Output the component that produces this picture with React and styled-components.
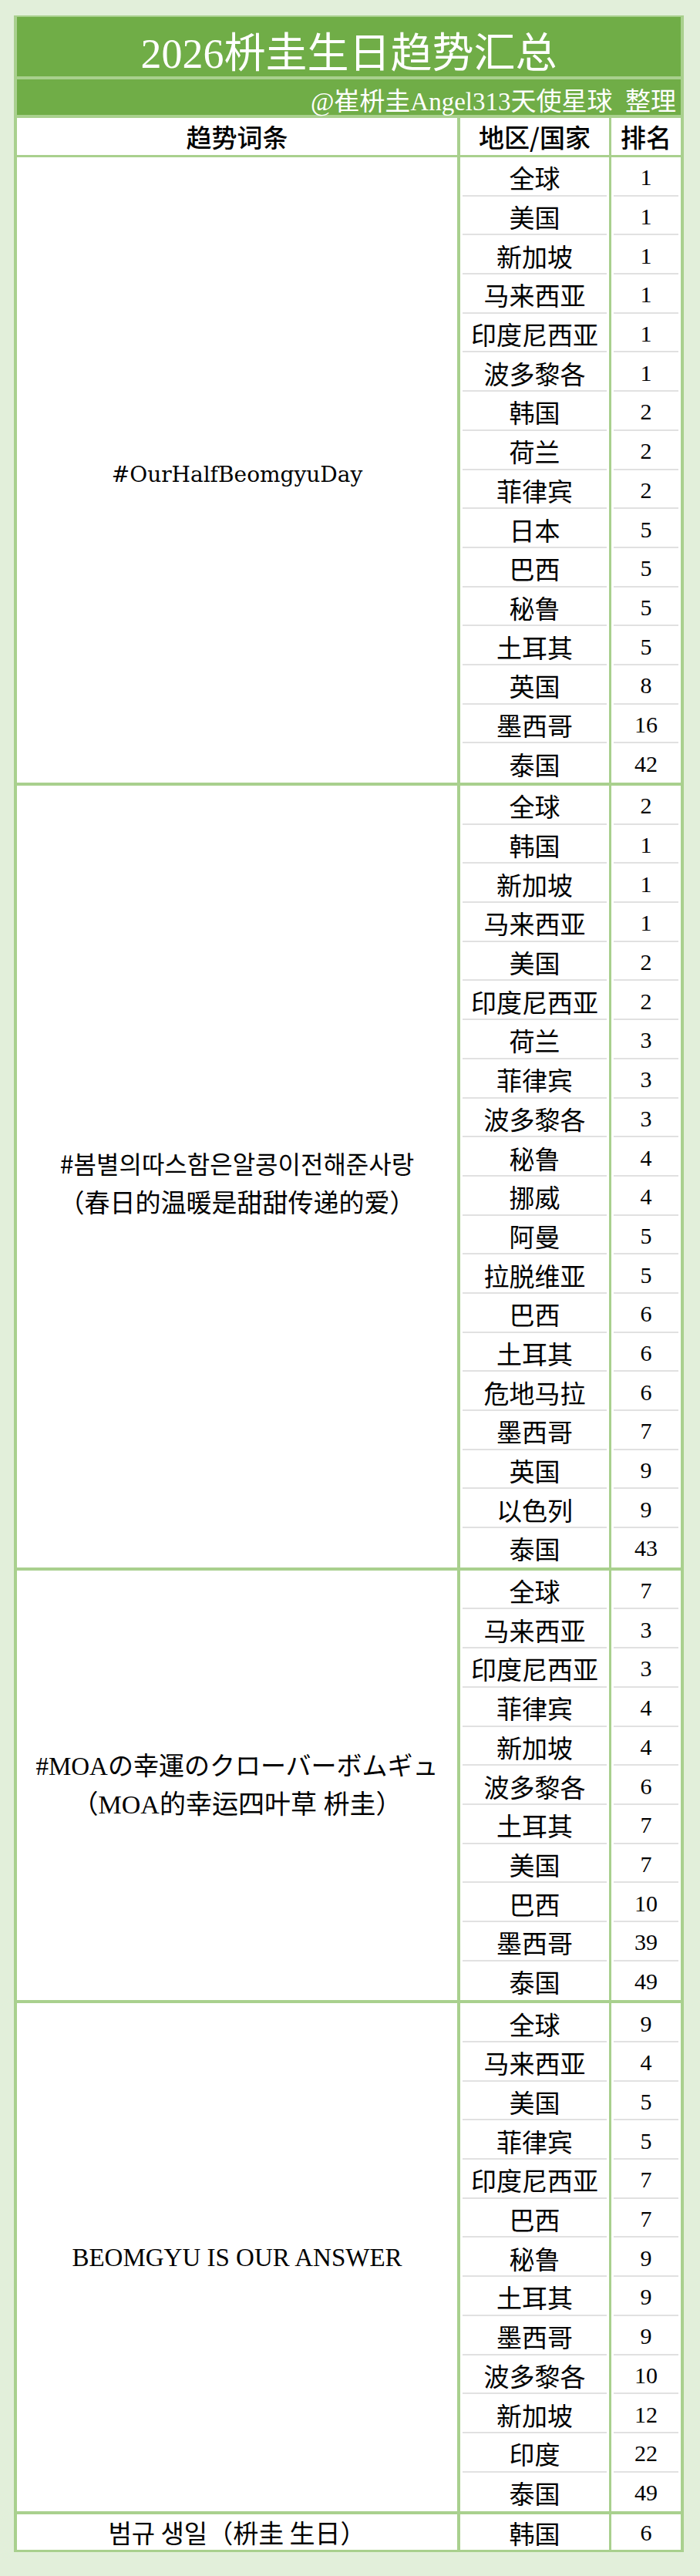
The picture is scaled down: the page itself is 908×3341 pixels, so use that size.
import React from 'react';
import styled, { createGlobalStyle } from 'styled-components';

const GlobalStyle = createGlobalStyle`
  html, body {
    margin: 0;
    padding: 0;
    background: #e2efda;
  }
`;

const LINE = '#a9d08e';
const CJK = '"Noto Sans CJK SC", sans-serif';

const Page = styled.div`
  min-height: 3341px;
  box-sizing: border-box;
  padding: 20px 0 26px 18px;
  background: #e2efda;
`;

const Table = styled.div`
  width: 869px;
  box-sizing: border-box;
  border-left: 4px solid ${LINE};
  border-right: 4px solid ${LINE};
  border-top: 2px solid ${LINE};
  background: #ffffff;
`;

const TitleBar = styled.div`
  height: 81px;
  box-sizing: border-box;
  background: #70ad47;
  color: #ffffff;
  display: flex;
  align-items: center;
  justify-content: center;
  padding-top: 8px;
  font-family: "Liberation Serif", "Noto Sans CJK SC", serif;
  font-size: 54px;
  border-bottom: 4px solid ${LINE};
`;

const SubBar = styled.div`
  height: 50px;
  box-sizing: border-box;
  background: #70ad47;
  color: #ffffff;
  display: flex;
  align-items: center;
  justify-content: flex-end;
  padding: 6px 6px 0 0;
  font-family: "Liberation Serif", "Noto Sans CJK SC", serif;
  font-size: 33px;
  white-space: pre;
  border-bottom: 4px solid ${LINE};
`;

const Grid = styled.div`
  display: grid;
  grid-template-columns: 575px 196px 90px;
  grid-auto-rows: ${(p) => p.$rowH}px;
  border-bottom: ${(p) => p.$sep}px solid ${LINE};
`;

const HeadCell = styled.div`
  display: flex;
  align-items: center;
  justify-content: center;
  font-family: ${CJK};
  font-size: 33px;
  font-weight: 500;
  color: #000;
  box-sizing: border-box;
  border-right: ${(p) => p.$border || 0}px solid ${LINE};
`;

const TermCell = styled.div`
  grid-column: 1;
  grid-row: 1 / span ${(p) => p.$span};
  display: flex;
  flex-direction: column;
  align-items: center;
  justify-content: center;
  border-right: 4px solid ${LINE};
  color: #000;
  padding-top: ${(p) => p.$shift || 0}px;
  box-sizing: border-box;
`;

const TermLine = styled.div`
  font-family: ${(p) => p.$font};
  font-size: ${(p) => p.$size}px;
  line-height: 50px;
  white-space: pre;
`;

const Cell = styled.div`
  display: flex;
  align-items: center;
  justify-content: center;
  box-sizing: border-box;
  color: #000;
  border-right: ${(p) => p.$border || 0}px solid ${LINE};
  background-image: ${(p) =>
    p.$last ? 'none' : 'linear-gradient(#e1e1e1, #e1e1e1)'};
  background-repeat: no-repeat;
  background-size: calc(100% - 6px) 2px;
  background-position: center bottom;
`;

const Region = styled(Cell)`
  font-family: ${CJK};
  font-size: 33px;
  padding-top: 2px;
`;

const Rank = styled(Cell)`
  font-family: "Liberation Serif", serif;
  font-size: 30px;
  padding-top: 2px;
`;

const fonts = {
  dejavu: '"DejaVu Serif", serif',
  kr: '"Noto Sans CJK KR", sans-serif',
  sc: '"Noto Sans CJK SC", sans-serif',
  jp: '"Liberation Serif", "Noto Sans CJK JP", serif',
  latin: '"Liberation Serif", serif',
  krsc: '"Noto Sans CJK KR", "Noto Sans CJK SC", sans-serif',
};

const groups = [
  {
    lines: [{ text: '#OurHalfBeomgyuDay', font: fonts.dejavu, size: 28 }],
    shift: 12,
    rows: [
      ['全球', 1], ['美国', 1], ['新加坡', 1], ['马来西亚', 1], ['印度尼西亚', 1],
      ['波多黎各', 1], ['韩国', 2], ['荷兰', 2], ['菲律宾', 2], ['日本', 5],
      ['巴西', 5], ['秘鲁', 5], ['土耳其', 5], ['英国', 8], ['墨西哥', 16], ['泰国', 42],
    ],
  },
  {
    lines: [
      { text: '#봄별의따스함은알콩이전해준사랑', font: fonts.kr, size: 32 },
      { text: '（春日的温暖是甜甜传递的爱）', font: fonts.sc, size: 33 },
    ],
    shift: 14,
    rows: [
      ['全球', 2], ['韩国', 1], ['新加坡', 1], ['马来西亚', 1], ['美国', 2],
      ['印度尼西亚', 2], ['荷兰', 3], ['菲律宾', 3], ['波多黎各', 3], ['秘鲁', 4],
      ['挪威', 4], ['阿曼', 5], ['拉脱维亚', 5], ['巴西', 6], ['土耳其', 6],
      ['危地马拉', 6], ['墨西哥', 7], ['英国', 9], ['以色列', 9], ['泰国', 43],
    ],
  },
  {
    lines: [
      { text: '#MOAの幸運のクローバーボムギュ', font: fonts.jp, size: 33 },
      { text: '（MOA的幸运四叶草 枡圭）', font: fonts.jp, size: 34 },
    ],
    shift: 0,
    rows: [
      ['全球', 7], ['马来西亚', 3], ['印度尼西亚', 3], ['菲律宾', 4], ['新加坡', 4],
      ['波多黎各', 6], ['土耳其', 7], ['美国', 7], ['巴西', 10], ['墨西哥', 39], ['泰国', 49],
    ],
  },
  {
    lines: [{ text: 'BEOMGYU IS OUR ANSWER', font: fonts.latin, size: 33 }],
    shift: 0,
    rows: [
      ['全球', 9], ['马来西亚', 4], ['美国', 5], ['菲律宾', 5], ['印度尼西亚', 7],
      ['巴西', 7], ['秘鲁', 9], ['土耳其', 9], ['墨西哥', 9], ['波多黎各', 10],
      ['新加坡', 12], ['印度', 22], ['泰国', 49],
    ],
  },
];

const TrendGroup = ({ group, rowH, sep }) => (
  <Grid $rowH={rowH} $sep={sep}>
    <TermCell $span={group.rows.length} $shift={group.shift}>
      {group.lines.map((l) => (
        <TermLine key={l.text} $font={l.font} $size={l.size}>
          {l.text}
        </TermLine>
      ))}
    </TermCell>
    {group.rows.map(([region, rank], i) => {
      const last = i === group.rows.length - 1;
      return (
        <React.Fragment key={region}>
          <Region $border={3} $last={last}>{region}</Region>
          <Rank $last={last}>{rank}</Rank>
        </React.Fragment>
      );
    })}
  </Grid>
);

export default function App() {
  return (
    <>
      <GlobalStyle />
      <Page>
        <Table>
          <TitleBar>2026枡圭生日趋势汇总</TitleBar>
          <SubBar>@崔枡圭Angel313天使星球  整理</SubBar>
          <Grid $rowH={48} $sep={3}>
            <HeadCell $border={4}>趋势词条</HeadCell>
            <HeadCell $border={3}>地区/国家</HeadCell>
            <HeadCell>排名</HeadCell>
          </Grid>
          {groups.map((g) => (
            <TrendGroup key={g.lines[0].text} group={g} rowH={50.7} sep={4} />
          ))}
          <TrendGroup
            group={{
              lines: [{ text: '범규 생일（枡圭 生日）', font: fonts.krsc, size: 33 }],
              shift: 0,
              rows: [['韩国', 6]],
            }}
            rowH={46}
            sep={3}
          />
        </Table>
      </Page>
    </>
  );
}
